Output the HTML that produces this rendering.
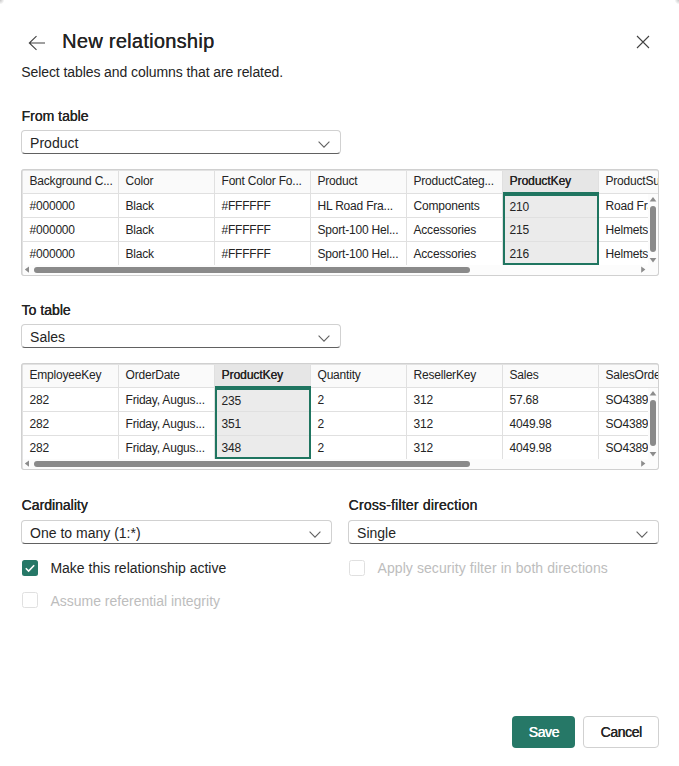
<!DOCTYPE html>
<html><head><meta charset="utf-8"><title>New relationship</title><style>
html,body{margin:0;padding:0;background:#fff;}
body{width:679px;height:766px;position:relative;overflow:hidden;font-family:"Liberation Sans", sans-serif;}
.t{position:absolute;white-space:nowrap;}
.dd{position:absolute;box-sizing:border-box;border:1px solid #d1d1d1;border-bottom-color:#616161;border-radius:4px;background:#fff;}
.tbl{position:absolute;box-sizing:border-box;border:solid #e2e2e2;border-width:2px 1px 1px 2px;border-radius:3px;overflow:hidden;background:#fff;}
.rows > div{position:absolute}
.tblo{position:absolute;box-sizing:border-box;border:1px solid #d0d0d0;border-radius:3px;}
.tbl > div, .tbl > svg{position:absolute;}
.hdr{background:#fafafa;}
.hl{position:absolute;height:1px;background:#e0e0e0;}
.vl{position:absolute;width:1px;background:#e0e0e0;}
.sel{position:absolute;box-sizing:border-box;border:2px solid #1f7560;border-top-width:4px;}
.vtrack,.htrack{position:absolute;background:#fcfcfc;}
.cb{position:absolute;width:16px;height:16px;box-sizing:border-box;border-radius:2.5px;}
.cb.on{background:#267867;}
.cb.on svg{position:absolute;left:0;top:0}
.cb.off{border:1px solid #e0e0e0;background:#fff;}
.btn{position:absolute;box-sizing:border-box;border-radius:4px;}
.btn.pri{background:#267867;}
.btn.sec{border:1px solid #d1d1d1;background:#fff;}
.corner{position:absolute;top:-10px;width:20px;height:20px;border-radius:50%;}
</style></head>
<body>
<div style="position:absolute;left:0;top:0;width:8px;height:8px;background:radial-gradient(circle at 0 0, rgba(150,150,150,.55) 0, rgba(150,150,150,0) 4.5px)"></div>
<div style="position:absolute;right:0;top:0;width:8px;height:8px;background:radial-gradient(circle at 100% 0, rgba(150,150,150,.55) 0, rgba(150,150,150,0) 4.5px)"></div>
<svg style="position:absolute;left:27px;top:34px" width="20" height="18" viewBox="0 0 20 18"><path d="M9.5 2.2 L2.3 9 L9.5 15.8 M2.3 9 H18" fill="none" stroke="#424242" stroke-width="1.1"/></svg>
<div class="t" style="left:62px;top:31.27px;font-size:20px;line-height:20px;font-weight:400;color:#242424;letter-spacing:0.28px;text-shadow:0.32px 0 0 #242424;">New relationship</div>
<svg style="position:absolute;left:636px;top:35px" width="14" height="14" viewBox="0 0 14 14"><path d="M1 1 L13 13 M13 1 L1 13" fill="none" stroke="#424242" stroke-width="1.1"/></svg>
<div class="t" style="left:21.2px;top:65.45px;font-size:14px;line-height:14px;font-weight:400;color:#242424;letter-spacing:-0.08px;">Select tables and columns that are related.</div>
<div class="t" style="left:21.5px;top:109.35px;font-size:14px;line-height:14px;font-weight:400;color:#242424;letter-spacing:0px;text-shadow:0.32px 0 0 #242424;">From table</div>
<div class="dd" style="left:21px;top:130px;width:320px;height:24px"></div>
<div class="t" style="left:30.1px;top:135.65px;font-size:14px;line-height:14px;font-weight:400;color:#242424;letter-spacing:0px;">Product</div>
<svg width="12" height="7" viewBox="0 0 12 7" style="position:absolute;left:318px;top:141px"><path d="M0.6 0.7 L6 6.1 L11.4 0.7" fill="none" stroke="#616161" stroke-width="1.1"/></svg>
<div class="tbl" style="left:21px;top:169px;width:638px;height:107px">
<div class="hdr" style="left:0;top:0;width:635px;height:22px"></div>
<div style="left:479px;top:0;width:97px;height:22px;background:#e6e6e6"></div>
<div style="left:479px;top:23px;width:97px;height:71px;background:#ebebeb"></div>
<div class="hl" style="left:0;top:22px;width:635px"></div>
<div class="hl" style="left:0;top:46px;width:625px"></div>
<div class="hl" style="left:0;top:70px;width:625px"></div>
<div class="vl" style="left:95px;top:0;height:94px"></div>
<div class="vl" style="left:191px;top:0;height:94px"></div>
<div class="vl" style="left:287px;top:0;height:94px"></div>
<div class="vl" style="left:383px;top:0;height:94px"></div>
<div class="vl" style="left:479px;top:0;height:94px"></div>
<div class="vl" style="left:575px;top:0;height:94px"></div>
<div class="t" style="left:6.5px;top:4.24px;font-size:12px;line-height:12px;font-weight:400;color:#242424;letter-spacing:-0.2px;">Background C...</div>
<div class="t" style="left:102.5px;top:4.24px;font-size:12px;line-height:12px;font-weight:400;color:#242424;letter-spacing:-0.2px;">Color</div>
<div class="t" style="left:198.5px;top:4.24px;font-size:12px;line-height:12px;font-weight:400;color:#242424;letter-spacing:-0.2px;">Font Color Fo...</div>
<div class="t" style="left:294.5px;top:4.24px;font-size:12px;line-height:12px;font-weight:400;color:#242424;letter-spacing:-0.2px;">Product</div>
<div class="t" style="left:390.5px;top:4.24px;font-size:12px;line-height:12px;font-weight:400;color:#242424;letter-spacing:-0.2px;">ProductCateg...</div>
<div class="t" style="left:486.5px;top:4.24px;font-size:12px;line-height:12px;font-weight:400;color:#242424;letter-spacing:-0.05px;text-shadow:0.32px 0 0 #242424;text-shadow:0.28px 0 0 #242424">ProductKey</div>
<div class="t" style="left:582.5px;top:4.24px;font-size:12px;line-height:12px;font-weight:400;color:#242424;letter-spacing:-0.2px;">ProductSu</div>
<div class="rows" style="left:0;top:23px;width:625px;height:71px;overflow:hidden">
<div class="t" style="left:6.5px;top:6.44px;font-size:12px;line-height:12px;font-weight:400;color:#242424;letter-spacing:-0.2px;">#000000</div>
<div class="t" style="left:102.5px;top:6.44px;font-size:12px;line-height:12px;font-weight:400;color:#242424;letter-spacing:-0.2px;">Black</div>
<div class="t" style="left:198.5px;top:6.44px;font-size:12px;line-height:12px;font-weight:400;color:#242424;letter-spacing:-0.2px;">#FFFFFF</div>
<div class="t" style="left:294.5px;top:6.44px;font-size:12px;line-height:12px;font-weight:400;color:#242424;letter-spacing:-0.2px;">HL Road Fra...</div>
<div class="t" style="left:390.5px;top:6.44px;font-size:12px;line-height:12px;font-weight:400;color:#242424;letter-spacing:-0.2px;">Components</div>
<div class="t" style="left:486.5px;top:7.44px;font-size:12px;line-height:12px;font-weight:400;color:#242424;letter-spacing:-0.2px;">210</div>
<div class="t" style="left:582.5px;top:6.44px;font-size:12px;line-height:12px;font-weight:400;color:#242424;letter-spacing:-0.2px;">Road Fra</div>
<div class="t" style="left:6.5px;top:30.44px;font-size:12px;line-height:12px;font-weight:400;color:#242424;letter-spacing:-0.2px;">#000000</div>
<div class="t" style="left:102.5px;top:30.44px;font-size:12px;line-height:12px;font-weight:400;color:#242424;letter-spacing:-0.2px;">Black</div>
<div class="t" style="left:198.5px;top:30.44px;font-size:12px;line-height:12px;font-weight:400;color:#242424;letter-spacing:-0.2px;">#FFFFFF</div>
<div class="t" style="left:294.5px;top:30.44px;font-size:12px;line-height:12px;font-weight:400;color:#242424;letter-spacing:-0.2px;">Sport-100 Hel...</div>
<div class="t" style="left:390.5px;top:30.44px;font-size:12px;line-height:12px;font-weight:400;color:#242424;letter-spacing:-0.2px;">Accessories</div>
<div class="t" style="left:486.5px;top:30.44px;font-size:12px;line-height:12px;font-weight:400;color:#242424;letter-spacing:-0.2px;">215</div>
<div class="t" style="left:582.5px;top:30.44px;font-size:12px;line-height:12px;font-weight:400;color:#242424;letter-spacing:-0.2px;">Helmets</div>
<div class="t" style="left:6.5px;top:54.44px;font-size:12px;line-height:12px;font-weight:400;color:#242424;letter-spacing:-0.2px;">#000000</div>
<div class="t" style="left:102.5px;top:54.44px;font-size:12px;line-height:12px;font-weight:400;color:#242424;letter-spacing:-0.2px;">Black</div>
<div class="t" style="left:198.5px;top:54.44px;font-size:12px;line-height:12px;font-weight:400;color:#242424;letter-spacing:-0.2px;">#FFFFFF</div>
<div class="t" style="left:294.5px;top:54.44px;font-size:12px;line-height:12px;font-weight:400;color:#242424;letter-spacing:-0.2px;">Sport-100 Hel...</div>
<div class="t" style="left:390.5px;top:54.44px;font-size:12px;line-height:12px;font-weight:400;color:#242424;letter-spacing:-0.2px;">Accessories</div>
<div class="t" style="left:486.5px;top:54.04px;font-size:12px;line-height:12px;font-weight:400;color:#242424;letter-spacing:-0.2px;">216</div>
<div class="t" style="left:582.5px;top:54.44px;font-size:12px;line-height:12px;font-weight:400;color:#242424;letter-spacing:-0.2px;">Helmets</div>
</div>
<div class="sel" style="left:480px;top:21px;width:96px;height:73px"></div>
<div class="vtrack" style="left:625px;top:23px;width:10px;height:71px"></div>
<svg style="left:625px;top:25px" width="10" height="7"><path d="M1.6 5.6 L5 1 L8.4 5.6Z" fill="#8c8c8c"/></svg>
<div style="left:627px;top:34.5px;width:6px;height:46.5px;border-radius:3px;background:#8a8a8a"></div>
<svg style="left:625px;top:86px" width="10" height="7"><path d="M1.6 1 L5 5.6 L8.4 1Z" fill="#8c8c8c"/></svg>
<div class="htrack" style="left:0;top:94px;width:635px;height:10px"></div>
<svg style="left:0px;top:95px" width="8" height="8"><path d="M6 0.6 L1.8 3.6 L6 6.8Z" fill="#8c8c8c"/></svg>
<div style="left:11px;top:96px;width:436px;height:6px;border-radius:3px;background:#8a8a8a"></div>
<svg style="left:617px;top:95px" width="8" height="8"><path d="M1.2 0.6 L5.4 3.6 L1.2 6.8Z" fill="#8c8c8c"/></svg>
</div>
<div class="tblo" style="left:21px;top:169px;width:638px;height:107px"></div>
<div class="t" style="left:21.5px;top:302.55px;font-size:14px;line-height:14px;font-weight:400;color:#242424;letter-spacing:0px;text-shadow:0.32px 0 0 #242424;">To table</div>
<div class="dd" style="left:21px;top:324px;width:320px;height:24px"></div>
<div class="t" style="left:30.1px;top:329.65px;font-size:14px;line-height:14px;font-weight:400;color:#242424;letter-spacing:0px;">Sales</div>
<svg width="12" height="7" viewBox="0 0 12 7" style="position:absolute;left:318px;top:335px"><path d="M0.6 0.7 L6 6.1 L11.4 0.7" fill="none" stroke="#616161" stroke-width="1.1"/></svg>
<div class="tbl" style="left:21px;top:363px;width:638px;height:107px">
<div class="hdr" style="left:0;top:0;width:635px;height:22px"></div>
<div style="left:191px;top:0;width:97px;height:22px;background:#e6e6e6"></div>
<div style="left:191px;top:23px;width:97px;height:71px;background:#ebebeb"></div>
<div class="hl" style="left:0;top:22px;width:635px"></div>
<div class="hl" style="left:0;top:46px;width:625px"></div>
<div class="hl" style="left:0;top:70px;width:625px"></div>
<div class="vl" style="left:95px;top:0;height:94px"></div>
<div class="vl" style="left:191px;top:0;height:94px"></div>
<div class="vl" style="left:287px;top:0;height:94px"></div>
<div class="vl" style="left:383px;top:0;height:94px"></div>
<div class="vl" style="left:479px;top:0;height:94px"></div>
<div class="vl" style="left:575px;top:0;height:94px"></div>
<div class="t" style="left:6.5px;top:4.24px;font-size:12px;line-height:12px;font-weight:400;color:#242424;letter-spacing:-0.2px;">EmployeeKey</div>
<div class="t" style="left:102.5px;top:4.24px;font-size:12px;line-height:12px;font-weight:400;color:#242424;letter-spacing:-0.2px;">OrderDate</div>
<div class="t" style="left:198.5px;top:4.24px;font-size:12px;line-height:12px;font-weight:400;color:#242424;letter-spacing:-0.05px;text-shadow:0.32px 0 0 #242424;text-shadow:0.28px 0 0 #242424">ProductKey</div>
<div class="t" style="left:294.5px;top:4.24px;font-size:12px;line-height:12px;font-weight:400;color:#242424;letter-spacing:-0.2px;">Quantity</div>
<div class="t" style="left:390.5px;top:4.24px;font-size:12px;line-height:12px;font-weight:400;color:#242424;letter-spacing:-0.2px;">ResellerKey</div>
<div class="t" style="left:486.5px;top:4.24px;font-size:12px;line-height:12px;font-weight:400;color:#242424;letter-spacing:-0.2px;">Sales</div>
<div class="t" style="left:582.5px;top:4.24px;font-size:12px;line-height:12px;font-weight:400;color:#242424;letter-spacing:-0.2px;">SalesOrde</div>
<div class="rows" style="left:0;top:23px;width:625px;height:71px;overflow:hidden">
<div class="t" style="left:6.5px;top:6.44px;font-size:12px;line-height:12px;font-weight:400;color:#242424;letter-spacing:-0.2px;">282</div>
<div class="t" style="left:102.5px;top:6.44px;font-size:12px;line-height:12px;font-weight:400;color:#242424;letter-spacing:-0.2px;">Friday, Augus...</div>
<div class="t" style="left:198.5px;top:7.44px;font-size:12px;line-height:12px;font-weight:400;color:#242424;letter-spacing:-0.2px;">235</div>
<div class="t" style="left:294.5px;top:6.44px;font-size:12px;line-height:12px;font-weight:400;color:#242424;letter-spacing:-0.2px;">2</div>
<div class="t" style="left:390.5px;top:6.44px;font-size:12px;line-height:12px;font-weight:400;color:#242424;letter-spacing:-0.2px;">312</div>
<div class="t" style="left:486.5px;top:6.44px;font-size:12px;line-height:12px;font-weight:400;color:#242424;letter-spacing:-0.2px;">57.68</div>
<div class="t" style="left:582.5px;top:6.44px;font-size:12px;line-height:12px;font-weight:400;color:#242424;letter-spacing:-0.2px;">SO43897</div>
<div class="t" style="left:6.5px;top:30.44px;font-size:12px;line-height:12px;font-weight:400;color:#242424;letter-spacing:-0.2px;">282</div>
<div class="t" style="left:102.5px;top:30.44px;font-size:12px;line-height:12px;font-weight:400;color:#242424;letter-spacing:-0.2px;">Friday, Augus...</div>
<div class="t" style="left:198.5px;top:30.44px;font-size:12px;line-height:12px;font-weight:400;color:#242424;letter-spacing:-0.2px;">351</div>
<div class="t" style="left:294.5px;top:30.44px;font-size:12px;line-height:12px;font-weight:400;color:#242424;letter-spacing:-0.2px;">2</div>
<div class="t" style="left:390.5px;top:30.44px;font-size:12px;line-height:12px;font-weight:400;color:#242424;letter-spacing:-0.2px;">312</div>
<div class="t" style="left:486.5px;top:30.44px;font-size:12px;line-height:12px;font-weight:400;color:#242424;letter-spacing:-0.2px;">4049.98</div>
<div class="t" style="left:582.5px;top:30.44px;font-size:12px;line-height:12px;font-weight:400;color:#242424;letter-spacing:-0.2px;">SO43897</div>
<div class="t" style="left:6.5px;top:54.44px;font-size:12px;line-height:12px;font-weight:400;color:#242424;letter-spacing:-0.2px;">282</div>
<div class="t" style="left:102.5px;top:54.44px;font-size:12px;line-height:12px;font-weight:400;color:#242424;letter-spacing:-0.2px;">Friday, Augus...</div>
<div class="t" style="left:198.5px;top:54.04px;font-size:12px;line-height:12px;font-weight:400;color:#242424;letter-spacing:-0.2px;">348</div>
<div class="t" style="left:294.5px;top:54.44px;font-size:12px;line-height:12px;font-weight:400;color:#242424;letter-spacing:-0.2px;">2</div>
<div class="t" style="left:390.5px;top:54.44px;font-size:12px;line-height:12px;font-weight:400;color:#242424;letter-spacing:-0.2px;">312</div>
<div class="t" style="left:486.5px;top:54.44px;font-size:12px;line-height:12px;font-weight:400;color:#242424;letter-spacing:-0.2px;">4049.98</div>
<div class="t" style="left:582.5px;top:54.44px;font-size:12px;line-height:12px;font-weight:400;color:#242424;letter-spacing:-0.2px;">SO43897</div>
</div>
<div class="sel" style="left:192px;top:21px;width:96px;height:73px"></div>
<div class="vtrack" style="left:625px;top:23px;width:10px;height:71px"></div>
<svg style="left:625px;top:25px" width="10" height="7"><path d="M1.6 5.6 L5 1 L8.4 5.6Z" fill="#8c8c8c"/></svg>
<div style="left:627px;top:34.5px;width:6px;height:46.5px;border-radius:3px;background:#8a8a8a"></div>
<svg style="left:625px;top:86px" width="10" height="7"><path d="M1.6 1 L5 5.6 L8.4 1Z" fill="#8c8c8c"/></svg>
<div class="htrack" style="left:0;top:94px;width:635px;height:10px"></div>
<svg style="left:0px;top:95px" width="8" height="8"><path d="M6 0.6 L1.8 3.6 L6 6.8Z" fill="#8c8c8c"/></svg>
<div style="left:11px;top:96px;width:436px;height:6px;border-radius:3px;background:#8a8a8a"></div>
<svg style="left:617px;top:95px" width="8" height="8"><path d="M1.2 0.6 L5.4 3.6 L1.2 6.8Z" fill="#8c8c8c"/></svg>
</div>
<div class="tblo" style="left:21px;top:363px;width:638px;height:107px"></div>
<div class="t" style="left:21.5px;top:497.55px;font-size:14px;line-height:14px;font-weight:400;color:#242424;letter-spacing:0px;text-shadow:0.32px 0 0 #242424;">Cardinality</div>
<div class="dd" style="left:21px;top:520px;width:311px;height:24px"></div>
<div class="t" style="left:30.1px;top:525.65px;font-size:14px;line-height:14px;font-weight:400;color:#242424;letter-spacing:0px;">One to many (1:*)</div>
<svg width="12" height="7" viewBox="0 0 12 7" style="position:absolute;left:309px;top:531px"><path d="M0.6 0.7 L6 6.1 L11.4 0.7" fill="none" stroke="#616161" stroke-width="1.1"/></svg>
<div class="t" style="left:348.5px;top:497.55px;font-size:14px;line-height:14px;font-weight:400;color:#242424;letter-spacing:0.2px;text-shadow:0.32px 0 0 #242424;">Cross-filter direction</div>
<div class="dd" style="left:348px;top:520px;width:311px;height:24px"></div>
<div class="t" style="left:357.1px;top:525.65px;font-size:14px;line-height:14px;font-weight:400;color:#242424;letter-spacing:0px;">Single</div>
<svg width="12" height="7" viewBox="0 0 12 7" style="position:absolute;left:636px;top:531px"><path d="M0.6 0.7 L6 6.1 L11.4 0.7" fill="none" stroke="#616161" stroke-width="1.1"/></svg>
<div class="cb on" style="left:22px;top:560px"><svg width="16" height="16" viewBox="0 0 16 16"><path d="M3.8 8.2 L6.6 11 L12.2 5.2" fill="none" stroke="#fff" stroke-width="1.6"/></svg></div>
<div class="t" style="left:50.4px;top:561.15px;font-size:14px;line-height:14px;font-weight:400;color:#242424;letter-spacing:0px;">Make this relationship active</div>
<div class="cb off" style="left:22px;top:592px"></div>
<div class="t" style="left:50.4px;top:593.55px;font-size:14px;line-height:14px;font-weight:400;color:#bdbdbd;letter-spacing:0px;">Assume referential integrity</div>
<div class="cb off" style="left:349px;top:560px"></div>
<div class="t" style="left:377.5px;top:561.15px;font-size:14px;line-height:14px;font-weight:400;color:#bdbdbd;letter-spacing:0.08px;">Apply security filter in both directions</div>
<div class="btn pri" style="left:512px;top:716px;width:63px;height:32px"></div>
<div class="t" style="left:528.5px;top:724.95px;font-size:14px;line-height:14px;font-weight:400;color:#ffffff;letter-spacing:-0.4px;text-shadow:0.32px 0 0 #ffffff;text-shadow:0.5px 0 0 #fff">Save</div>
<div class="btn sec" style="left:583px;top:716px;width:76px;height:32px"></div>
<div class="t" style="left:600.5px;top:724.95px;font-size:14px;line-height:14px;font-weight:400;color:#242424;letter-spacing:-0.4px;text-shadow:0.32px 0 0 #242424;">Cancel</div>
</body></html>
